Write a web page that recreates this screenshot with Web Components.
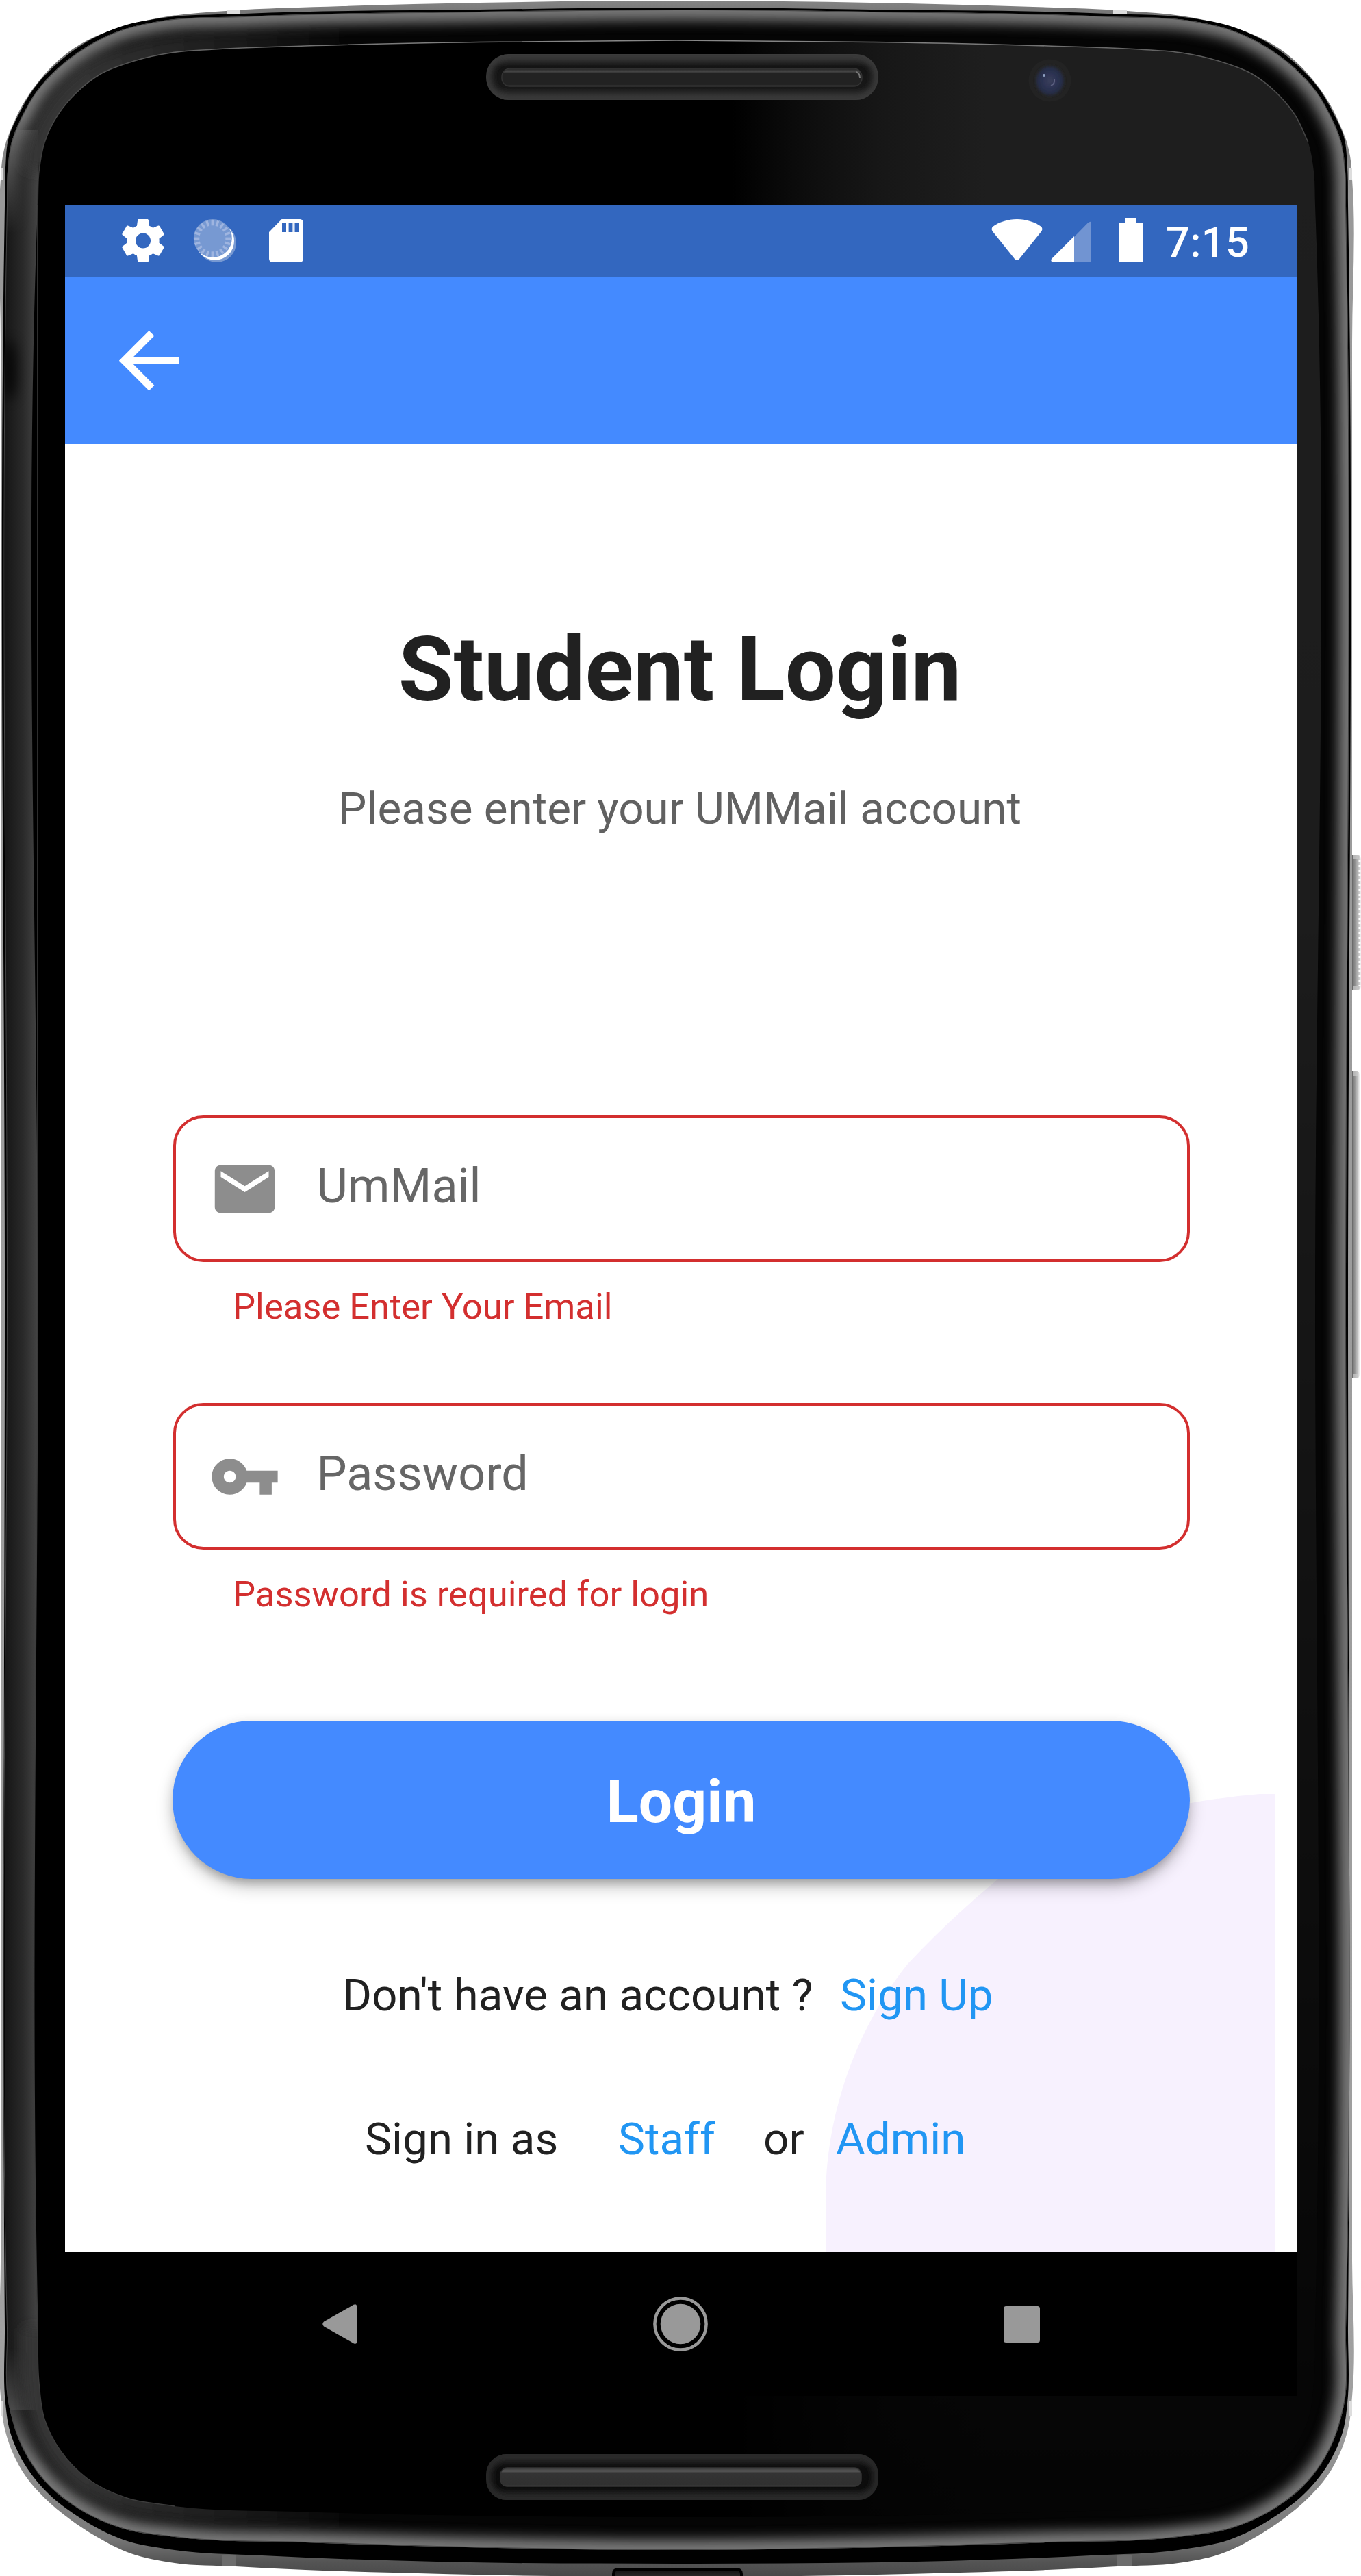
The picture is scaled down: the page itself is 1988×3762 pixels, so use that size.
<!DOCTYPE html>
<html lang="en">
<head>
<meta charset="utf-8">
<title>Student Login</title>
<style>
  html, body { margin: 0; background: #fff; }
  body { font-family: Roboto, "Liberation Sans", sans-serif; }
</style>
</head>
<body>
<phone-frame>
  <status-bar time="7:15"></status-bar>
  <app-bar></app-bar>
  <login-screen>
    <page-heading slot="heading">Student Login<span slot="sub">Please enter your UMMail account</span></page-heading>
    <text-field slot="fields" icon="mail" error="Please Enter Your Email">UmMail</text-field>
    <text-field slot="fields" icon="key" error="Password is required for login">Password</text-field>
    <pill-button slot="action">Login</pill-button>
    <link-row slot="links" style="--start:405px;--cols:727px auto"><span>Don't have an account ?</span><a>Sign Up</a></link-row>
    <link-row slot="links" style="--start:438px;--cols:370px 212px 106px auto"><span>Sign in as</span><a>Staff</a><span>or</span><a>Admin</a></link-row>
  </login-screen>
  <nav-bar></nav-bar>
</phone-frame>

<script>
const define = (name, html, setup) => customElements.define(name, class extends HTMLElement {
  constructor() {
    super();
    this.attachShadow({ mode: 'open' }).innerHTML = html;
  }
  connectedCallback() { if (setup) setup(this, this.shadowRoot); }
});

/* Icons: [viewBox, width, height, markup] */
const ticks = Array.from({ length: 20 }, (_, i) =>
  `<path d="M27 9V1" transform="translate(.3 .3) rotate(${i * 18} 27 28)"/>`).join('');
const ICONS = {
  gear: ['2.3 2 19.4 20', 62, 63, '<path fill="#fff" d="M19.43 12.98c.04-.32.07-.64.07-.98s-.03-.66-.07-.98l2.11-1.65c.19-.15.24-.42.12-.64l-2-3.46c-.12-.22-.39-.3-.61-.22l-2.49 1c-.52-.4-1.08-.73-1.69-.98l-.38-2.65C14.46 2.18 14.25 2 14 2h-4c-.25 0-.46.18-.49.42l-.38 2.65c-.61.25-1.17.59-1.69.98l-2.49-1c-.23-.09-.49 0-.61.22l-2 3.46c-.13.22-.07.49.12.64l2.11 1.65c-.04.32-.07.65-.07.98s.03.66.07.98l-2.11 1.65c-.19.15-.24.42-.12.64l2 3.46c.12.22.39.3.61.22l2.49-1c.52.4 1.08.73 1.69.98l.38 2.65c.03.24.24.42.49.42h4c.25 0 .46-.18.49-.42l.38-2.65c.61-.25 1.17-.59 1.69-.98l2.49 1c.23.09.49 0 .61-.22l2-3.46c.12-.22.07-.49-.12-.64l-2.11-1.65zM12 15.5c-1.93 0-3.5-1.57-3.5-3.5s1.57-3.5 3.5-3.5 3.5 1.57 3.5 3.5-1.57 3.5-3.5 3.5z"/>'],
  moon: ['0 0 62 63', 62, 63, `<circle cx="33.5" cy="34.5" r="28.5" fill="#7799d2"/><circle cx="31" cy="32" r="28" fill="#fff"/><circle cx="27.8" cy="28" r="28" fill="#7799d2"/><g stroke="#9fb5e0" stroke-width="3.4">${ticks}</g>`],
  sd: ['0 0 50 63', 50, 63, '<path fill="#fff" d="M18.5 0H45a5 5 0 0 1 5 5v53a5 5 0 0 1-5 5H5a5 5 0 0 1-5-5V19z"/><path fill="#3367bf" d="M19 6h6v13h-6zM29 6h5v13h-5zM37.500 6h6.500v13h-6.500z"/><path fill="#a9bfe5" d="M27 6h2v13h-2zM34 6h1.300v13H34z"/>'],
  wifi: ['0 0 75 63', 75, 63, '<path fill="#fff" d="M2 11C12 4 24 0 37.500 0S63 4 73 11q2.500 3 .500 6.500L41 58q-3.500 4-7 0L1.500 17.500Q-.500 14 2 11z"/>'],
  signal: ['0 0 59 63', 59, 63, '<path fill="#7194d2" d="M34 26 54 5.500q5-3.500 5 0V60q0 3-3 3H34z"/><path fill="#fff" d="M34 25V63H2.500Q-1 61 1 58z"/>'],
  battery: ['0 0 36 64', 36, 64, '<path fill="#fff" d="M10 0h16v6h7q3 0 3 3v52q0 3-3 3H3q-3 0-3-3V9q0-3 3-3h7z"/>'],
  back: ['0 0 24 24', 131.25, 131.25, '<path fill="#fff" d="M20 11H7.830l5.590-5.590L12 4l-8 8 8 8 1.410-1.410L7.830 13H20v-2z"/>'],
  mail: ['0 0 24 24', 105, 105, '<path fill="#8d8d8d" d="M20 4H4c-1.100 0-1.990.900-1.990 2L2 18c0 1.100.900 2 2 2h16c1.100 0 2-.900 2-2V6c0-1.100-.900-2-2-2zm0 4l-8 5-8-5V6l8 5 8-5v2z"/>'],
  key: ['0 0 24 24', 105, 105, '<path fill="#8d8d8d" d="M12.650 10C11.830 7.670 9.610 6 7 6c-3.310 0-6 2.690-6 6s2.690 6 6 6c2.610 0 4.830-1.670 5.650-4H17v4h4v-4h2v-4H12.650zM7 14c-1.100 0-2-.900-2-2s.900-2 2-2 2 .900 2 2-.900 2-2 2z"/>'],
  navBack: ['0 0 50 58', 50, 58, '<path fill="#999" d="M45.500.800q4.500-2 4.500 2v52.400q0 4-4.500 2L2 32.500q-3.500-3.500 0-7z"/>'],
  navHome: ['0 0 80 80', 80, 80, '<circle cx="40" cy="40" r="37.600" fill="none" stroke="#999" stroke-width="4.500"/><circle cx="40" cy="40" r="29.300" fill="#999"/>'],
  navRecent: ['0 0 53 53', 53, 53, '<rect width="53" height="53" rx="3.500" fill="#999"/>'],
};
customElements.define('md-icon', class extends HTMLElement {
  static observedAttributes = ['name'];
  constructor() {
    super();
    this.attachShadow({ mode: 'open' });
  }
  attributeChangedCallback() {
    const icon = ICONS[this.getAttribute('name')];
    if (!icon) return;
    const [box, w, h, body] = icon;
    this.shadowRoot.innerHTML = `<style>:host{display:block;flex:none;line-height:0}svg{display:block;overflow:visible}</style><svg viewBox="${box}" width="${w}" height="${h}">${body}</svg>`;
  }
});

define('status-bar', `<style>
  :host{display:flex;align-items:flex-start;height:84px;padding:21px 66px 0 83px;background:#3367bf;color:#fff}
  .l,.r{display:flex;align-items:flex-start}
  .l{gap:43px}.l md-icon:last-child{margin-left:5px}
  .r{margin-left:auto}
  .s{margin:0 40px 0 12px}.b{margin-top:-1px}
  time{font-size:61.25px;font-weight:500;line-height:72px;width:126px;margin:-2px 0 0 33px;letter-spacing:.4px;white-space:nowrap}
  </style><div class="l"><md-icon name="gear"></md-icon><md-icon name="moon"></md-icon><md-icon name="sd"></md-icon></div>
  <div class="r"><md-icon name="wifi"></md-icon><md-icon class="s" name="signal"></md-icon><md-icon class="b" name="battery"></md-icon><time></time></div>`,
  (el, root) => { root.querySelector('time').textContent = el.getAttribute('time'); });

define('app-bar', `<style>:host{display:flex;align-items:center;height:245px;padding-left:57px;box-sizing:border-box;background:#448aff}</style><md-icon name="back"></md-icon>`);

define('page-heading', `<style>
  :host{display:flex;flex-direction:column;align-items:center;padding-right:4px;white-space:nowrap}
  h1{margin:0;font-size:131.25px;line-height:154px;font-weight:700;color:#212121}
  p{margin:87px 0 0;font-size:65.625px;line-height:77px;color:#616161}
  </style><h1><slot></slot></h1><p><slot name="sub"></slot></p>`);

define('text-field', `<style>
  :host{display:block}
  .box{display:flex;align-items:center;height:214px;box-sizing:border-box;border:4.4px solid #d32f2f;border-radius:44px;padding-left:48px}
  label{padding:0 0 8px 52.5px;font-size:70px;line-height:82px;color:#666}
  p{margin:34px 0 0 87px;font-size:52.5px;line-height:62px;color:#d32f2f;white-space:nowrap}
  </style><div class="box"><md-icon></md-icon><label><slot></slot></label></div><p></p>`,
  (el, root) => {
    root.querySelector('md-icon').setAttribute('name', el.getAttribute('icon'));
    root.querySelector('p').textContent = el.getAttribute('error');
  });

define('pill-button', `<style>
  :host{display:block}
  button{all:unset;display:flex;align-items:center;justify-content:center;width:100%;height:231px;box-sizing:border-box;padding-top:5px;border-radius:116px;background:#448aff;color:#fff;
  font-size:87.5px;font-weight:700;line-height:103px;
  box-shadow:0 12px 12px -6px rgba(0,0,0,.16),0 12px 24px 0 rgba(0,0,0,.22),0 4px 18px 0 rgba(0,0,0,.08)}
  </style><button><slot></slot></button>`);

define('link-row', `<style>
  :host{display:grid;grid-template-columns:var(--cols);justify-content:start;padding-left:var(--start);font-size:65.625px;line-height:77px;color:#212121;white-space:nowrap}
  ::slotted(a){color:#2196f3}
  </style><slot></slot>`);

define('login-screen', `<style>
  :host{display:grid;height:2640px;background:#fff;overflow:hidden}
  :host>*{grid-area:1/1}
  .blob{justify-self:end;align-self:end;margin-right:32px;display:block}
  .content{display:flex;flex-direction:column;padding-top:252px}
  .fields{display:flex;flex-direction:column;gap:110px;margin:410px 157px 0 158px}
  .action{margin:154px 157px 0}
  .links{display:flex;flex-direction:column;gap:133px;margin-top:131px}
  </style>
  <svg class="blob" width="657" height="669" viewBox="1206 2620 657 669"><path fill="#f7f1fe" d="M1863 2620H1840Q1790 2624 1740 2633C1630 2652 1540 2684 1458 2744Q1388 2802 1326 2868C1260 2950 1206 3075 1206 3210V3289H1863z"/></svg>
  <div class="content"><slot name="heading"></slot><div class="fields"><slot name="fields"></slot></div><div class="action"><slot name="action"></slot></div><div class="links"><slot name="links"></slot></div></div>`);

define('nav-bar', `<style>:host{display:flex;align-items:center;height:210px;box-sizing:border-box;padding:0 376px;justify-content:space-between;background:#000}</style>
  <md-icon name="navBack"></md-icon><md-icon name="navHome"></md-icon><md-icon name="navRecent"></md-icon>`);

/* Device contours: left half only, from the top centre round to the bottom centre; mirrored at x=988. */
const OUTER = [[988,1],[700,4],[500,9],[330,16],[245,24],[196,34],[147,50],[107,71],[80,93],[54,122],[33,153],[18,184],[9,207],[4,228],[1,262],[1,500],[1,1900],[1,3300],[1,3500],[6,3543],[19,3583],[38,3617],[64,3647],[102,3679],[140,3704],[191,3729],[255,3743],[344,3748],[446,3753],[574,3757],[740,3761],[988,3763]];
const INNER = [[988,11],[700,14],[357,20],[232,27],[179,38],[134,57],[80,96],[49,130],[29,164],[13,200],[8,245],[7,300],[7,1900],[7,3400],[8,3510],[13,3545],[32,3592],[64,3635],[120,3679],[180,3709],[255,3724],[383,3732],[638,3741],[988,3744]];
const BEZEL = [[988,14],[700,17],[357,24],[232,31],[180,43],[137,62],[84,100],[53,134],[33,168],[17,207],[11,250],[10,300],[10,1900],[10,3400],[13,3513],[32,3573],[64,3622],[120,3667],[180,3693],[255,3705],[446,3713],[638,3719],[988,3724]];
const GLASS = [[988,59],[700,61.5],[446,67],[312,72],[250,77],[196,89],[147,108],[112,135],[85,167],[65,208],[57,250],[55,300],[55,1900],[55,3400],[57,3480],[65,3533],[89,3580],[128,3620],[185,3648],[255,3660],[434,3668],[700,3674],[988,3676]];
function smooth(pts, before, after) {
  let d = `M${pts[0]}`;
  const dir = (a, b, c) => {
    let x = 0, y = 0;
    for (const [p, q] of [[a, b], [b, c]]) {
      const l = Math.hypot(q[0] - p[0], q[1] - p[1]);
      if (l) { x += (q[0] - p[0]) / (l * l); y += (q[1] - p[1]) / (l * l); }
    }
    const n = Math.hypot(x, y) || 1;
    return [x / n, y / n];
  };
  for (let i = 0; i < pts.length - 1; i++) {
    const a = pts[i - 1] || before || pts[i], b = pts[i], c = pts[i + 1], e = pts[i + 2] || after || c;
    const k = Math.hypot(c[0] - b[0], c[1] - b[1]) / 3, u = dir(a, b, c), v = dir(b, c, e);
    d += `C${(b[0] + u[0] * k).toFixed(1)} ${(b[1] + u[1] * k).toFixed(1)} ${(c[0] - v[0] * k).toFixed(1)} ${(c[1] - v[1] * k).toFixed(1)} ${c[0]} ${c[1]}`;
  }
  return d;
}
const mirror = ([x, y]) => [1976 - x, y];
const closed = half => {
  const ring = half.concat(half.slice(0, -1).reverse().map(mirror));
  return smooth(ring, mirror(half[1]), half[1]) + 'Z';
};
/* The lit edge of the bezel; a mask fades it out along the straight left side. */
const lit = closed(BEZEL);
const ART = `<svg class="art" width="1988" height="3762" viewBox="0 0 1988 3762">
  <defs>
    <linearGradient id="metal" x2="0" y2="1"><stop offset="0" stop-color="#858585"/><stop offset=".008" stop-color="#6c6c6c"/><stop offset=".06" stop-color="#858585"/><stop offset=".075" stop-color="#999"/><stop offset=".94" stop-color="#a0a0a0"/><stop offset=".985" stop-color="#777"/><stop offset=".994" stop-color="#555"/><stop offset="1" stop-color="#484848"/></linearGradient>
    <linearGradient id="sheen" gradientUnits="userSpaceOnUse" x1="1070" x2="1440" y1="0" y2="0"><stop offset="0" stop-color="#1e1e1e" stop-opacity="0"/><stop offset=".6" stop-color="#171717"/><stop offset="1" stop-color="#1e1e1e"/></linearGradient>
    <linearGradient id="fall" x2="0" y2="1"><stop offset="0" stop-color="#fff"/><stop offset=".35" stop-color="#eee"/><stop offset=".65" stop-color="#888"/><stop offset=".9" stop-color="#3c3c3c"/><stop offset="1" stop-color="#222"/></linearGradient>
    <mask id="fm" maskUnits="userSpaceOnUse" x="0" y="0" width="1988" height="3762"><rect width="1988" height="3762" fill="url(#fall)"/></mask>
    <linearGradient id="leftfade" gradientUnits="userSpaceOnUse" x1="0" x2="0" y1="170" y2="3600"><stop offset="0" stop-color="#fff"/><stop offset=".05" stop-color="#000"/><stop offset=".95" stop-color="#000"/><stop offset="1" stop-color="#fff"/></linearGradient>
    <mask id="lm" maskUnits="userSpaceOnUse" x="0" y="0" width="1988" height="3762"><rect width="1988" height="3762" fill="#fff"/><rect y="170" width="400" height="3430" fill="url(#leftfade)"/></mask>
    <linearGradient id="corner" gradientUnits="userSpaceOnUse" x1="120" x2="520" y1="0" y2="0"><stop offset="0" stop-color="#343434"/><stop offset="1" stop-color="#343434" stop-opacity="0"/></linearGradient>
    <linearGradient id="side" gradientUnits="userSpaceOnUse" x1="10" x2="56" y1="0" y2="0"><stop offset="0" stop-color="#181818"/><stop offset=".5" stop-color="#292929"/><stop offset="1" stop-color="#454545"/></linearGradient>
    <linearGradient id="edge" x2="0" y2="1"><stop offset="0" stop-color="#888"/><stop offset=".05" stop-color="#666"/><stop offset=".12" stop-color="#555"/><stop offset=".95" stop-color="#333"/><stop offset=".99" stop-color="#333"/><stop offset="1" stop-color="#000" stop-opacity="0"/></linearGradient>
    <linearGradient id="cup" x2="0" y2="1"><stop offset="0" stop-color="#343434"/><stop offset=".28" stop-color="#141414"/><stop offset=".72" stop-color="#181818"/><stop offset="1" stop-color="#2d2d2d"/></linearGradient>
    <linearGradient id="cup2" x2="0" y2="1"><stop offset="0" stop-color="#292929"/><stop offset=".3" stop-color="#0d0d0d"/><stop offset=".72" stop-color="#0c0c0c"/><stop offset="1" stop-color="#232323"/></linearGradient>
    <linearGradient id="bar" x2="0" y2="1"><stop offset="0" stop-color="#222"/><stop offset=".18" stop-color="#454545"/><stop offset=".28" stop-color="#222"/><stop offset=".9" stop-color="#222"/><stop offset="1" stop-color="#3c3c3c"/></linearGradient>
    <linearGradient id="bar2" x2="0" y2="1"><stop offset="0" stop-color="#333"/><stop offset=".18" stop-color="#5a5a5a"/><stop offset=".28" stop-color="#343434"/><stop offset=".9" stop-color="#303030"/><stop offset="1" stop-color="#3c3c3c"/></linearGradient>
    <linearGradient id="key" x2="1"><stop offset="0" stop-color="#666"/><stop offset=".4" stop-color="#999"/><stop offset=".75" stop-color="#c4c4c4"/><stop offset="1" stop-color="#f2f2f2"/></linearGradient>
    <linearGradient id="port" x2="0" y2="1"><stop offset="0" stop-color="#111"/><stop offset="1" stop-color="#333"/></linearGradient>
    <radialGradient id="lens"><stop offset="0" stop-color="#3a3f5c"/><stop offset=".5" stop-color="#2c3252"/><stop offset=".8" stop-color="#262d47"/><stop offset="1" stop-color="#232323"/></radialGradient>
    <filter id="soft" filterUnits="userSpaceOnUse" x="-60" y="-60" width="2110" height="3900"><feGaussianBlur stdDeviation="9"/></filter>
    <filter id="soft2" filterUnits="userSpaceOnUse" x="680" y="40" width="640" height="3700"><feGaussianBlur stdDeviation="5"/></filter>
    <filter id="lens-soft" x="-20%" y="-20%" width="140%" height="140%"><feGaussianBlur stdDeviation="1.5"/></filter>
    <clipPath id="bz"><path d="${closed(BEZEL)}"/></clipPath>
    <clipPath id="gl"><path d="${closed(GLASS)}"/></clipPath>
    <clipPath id="c1"><rect x="710" y="79" width="573" height="67" rx="33"/></clipPath>
    <clipPath id="c2"><rect x="710" y="3584" width="573" height="67" rx="30"/></clipPath>
  </defs>
  <g><path fill="url(#key)" d="M1975 1249h9q4 0 4 8v181q0 8-4 8h-9z"/><path stroke="#fff" stroke-width="3" stroke-dasharray="3 4" d="M1986 1256V1440"/><path fill="url(#key)" d="M1975 1564h7q4 0 4 8v433q0 8-4 8h-7z"/><path fill="#ccc" opacity=".7" d="M1976 1249h8v6h-8zM1976 1440h8v6h-8zM1976 1564h8v7h-8zM1976 2006h8v7h-8z"/></g>
  <path fill="url(#metal)" d="${closed(OUTER)}"/>
  <path fill="#ddd" d="M331 15h20v6h-20zM1626 15h20v6h-20zM1 245h4v18H1zM1971 245h4v18h-4zM1 3506h4v22H1zM1971 3506h4v22h-4z"/>
  <path fill="#6c6c6c" d="M324 3731h20v17h-20zM1632 3731h22v17h-22z"/>
  <path fill="#000" d="${closed(INNER)}"/>
  <g clip-path="url(#bz)">
    <path fill="#050505" d="${closed(BEZEL)}"/>
    <path fill="url(#side)" d="M8 190H56V3520H8z"/>
    <ellipse cx="14" cy="540" rx="10" ry="44" fill="#000" opacity=".8" filter="url(#soft)"/>
    <g filter="url(#soft)" fill="none">
      <path stroke="url(#corner)" stroke-width="50" d="${smooth(GLASS.slice(1, 11))}"/>
      <path stroke="url(#corner)" stroke-width="44" d="${smooth(GLASS.slice(13, 22))}"/>
    </g>
    <g mask="url(#lm)"><path filter="url(#soft)" fill="none" stroke="#7c7c7c" stroke-width="30" d="${lit}"/></g>
    <path fill="none" stroke="#444" stroke-width="2" d="${closed(BEZEL)}"/>
  </g>
  <path fill="#000" d="${closed(GLASS)}"/>
  <g clip-path="url(#gl)"><rect x="1070" width="860" height="3762" fill="url(#sheen)" mask="url(#fm)"/></g>
  <path fill="none" stroke="url(#edge)" stroke-width="1.600" d="${smooth(GLASS.slice(0, 12).reverse().concat(GLASS.slice(1, 10).map(mirror)))}"/>
  <path fill="none" stroke="#3c3c3c" stroke-width="1.500" d="${smooth(GLASS.slice(11, 20))}"/>
  <rect x="710" y="79" width="573" height="67" rx="33" fill="url(#cup)"/>
  <g clip-path="url(#c1)"><rect x="711" y="80" width="571" height="65" rx="32" fill="none" stroke="#3a3a3a" stroke-width="14" filter="url(#soft2)"/></g>
  <rect x="733" y="100" width="526" height="26" rx="12" fill="url(#bar)" stroke="#333" stroke-width="1.500"/>
  <path d="M1251 105q5 2 5 9" stroke="#777" stroke-width="2" fill="none"/>
  <rect x="710" y="3584" width="573" height="67" rx="30" fill="url(#cup2)"/>
  <g clip-path="url(#c2)"><rect x="711" y="3585" width="571" height="65" rx="29" fill="none" stroke="#2c2c2c" stroke-width="14" filter="url(#soft2)"/></g>
  <rect x="731" y="3604" width="527" height="27" rx="10" fill="url(#bar2)" stroke="#333" stroke-width="1.500"/>
  <circle cx="1533.500" cy="117.500" r="31" fill="#232323"/><ellipse cx="1533.500" cy="118" rx="22" ry="23" fill="url(#lens)" filter="url(#lens-soft)"/><circle cx="1525" cy="110" r="2" fill="#8fa0c0"/><path d="M1540 116q1 7-5 9" stroke="#5b6080" stroke-width="2" fill="none"/>
  <path fill="url(#port)" stroke="#000" stroke-width="4" d="M896 3768V3759q0-7 8-7H1075q8 0 8 7v9z"/>
</svg>`;
define('phone-frame', `<style>
  :host{display:grid;width:1988px;height:3762px;overflow:hidden}
  :host>*{grid-area:1/1}
  .art{display:block}
  .screen{display:flex;flex-direction:column;z-index:1;margin:299px 93px 263px 95px;overflow:hidden}
  </style>${ART}<div class="screen"><slot></slot></div>`);
</script>
</body>
</html>
